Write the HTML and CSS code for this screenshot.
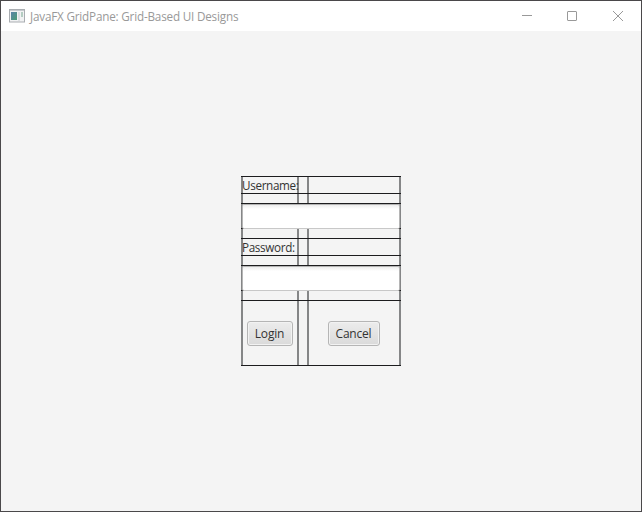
FILE: index.html
```html
<!DOCTYPE html>
<html lang="en">
<head>
<meta charset="utf-8">
<title>JavaFX GridPane: Grid-Based UI Designs</title>
<link rel="stylesheet" href="styles.css">
</head>
<body>
<div class="window">
  <header class="titlebar">
    <svg class="app-icon" width="16" height="14" viewBox="0 0 16 14">
      <defs><linearGradient id="g" x1="0" y1="0" x2="1" y2="1"><stop offset="0" stop-color="#5a83a8"/><stop offset="1" stop-color="#4c9c75"/></linearGradient></defs>
      <rect x=".5" y=".5" width="15" height="12.5" fill="#f1f2f3" stroke="#a9adb1"/>
      <path d="M1 1.5h14" stroke="#c5c9cd"/>
      <rect x="2" y="3" width="6" height="8" fill="url(#g)"/>
      <rect x="9" y="3" width="2" height="9" fill="#dcdfe2"/>
      <rect x="12" y="3" width="2" height="5" fill="#b4cdc2"/>
    </svg>
    <h1 class="title">JavaFX GridPane: Grid-Based UI Designs</h1>
    <svg class="controls" width="104" height="12" viewBox="0 0 104 12" fill="none" stroke="#999">
      <path d="M1 5.5h10"/>
      <rect x="46.5" y="1.5" width="9" height="9" rx=".5"/>
      <path d="M92 1l10 10M102 1l-10 10"/>
    </svg>
  </header>
  <main class="content">
    <form class="grid-pane">
      <label class="label user">Username:</label>
      <div class="field user-field"></div>
      <label class="label pass">Password:</label>
      <div class="field pass-field"></div>
      <button type="button" class="button login">Login</button>
      <button type="button" class="button cancel">Cancel</button>
    </form>
  </main>
</div>
</body>
</html>
```

FILE: styles.css
```css
* { box-sizing: border-box; }

body {
  margin: 0;
  font: 12px/17px "Open Sans", "Noto Sans", sans-serif;
  color: #333;
}

.window {
  display: flex;
  flex-direction: column;
  width: 642px;
  height: 512px;
  border: 1px solid #4a484a;
  background: #f4f4f4;
}

.titlebar {
  display: flex;
  align-items: center;
  height: 30px;
  padding: 0 16px 0 8px;
  background: #fff;
}

.title {
  margin: 0 auto 0 5px;
  font-size: 11.7px;
  font-weight: 400;
  letter-spacing: -0.19px;
  color: #999;
}

.content {
  flex: 1;
  padding: 145px 0 0 240px;
}

/* Grid lines: row lines are painted over the column lines. */
.grid-pane {
  --line: #1c1c1e;
  --col: #858687;
  display: grid;
  grid-template-columns: 57px 10px 93px;
  grid-template-rows: 17px 10px 26px 9px 17px 10px 26px 9px 66px;
  width: 160px;
  background:
    linear-gradient(var(--line) 0 1px, transparent 0 17px, var(--line) 0 18px,
      transparent 0 27px, var(--line) 0 28px, transparent 0 52px, var(--line) 0 53px,
      transparent 0 62px, var(--line) 0 63px, transparent 0 79px, var(--line) 0 80px,
      transparent 0 89px, var(--line) 0 90px, transparent 0 114px, var(--line) 0 115px,
      transparent 0 124px, var(--line) 0 125px, transparent 0 189px, var(--line) 0),
    linear-gradient(90deg, var(--col) 0 2px, transparent 0 56px, var(--col) 0 58px,
      transparent 0 66px, var(--col) 0 68px, transparent 0 158px, var(--col) 0);
}

.label {
  grid-column: 1;
  padding: 1px 0 0 1px;
  font-size: 11.7px;
  letter-spacing: -0.33px;
  white-space: nowrap;
}

.user { grid-row: 1; }
.pass { grid-row: 5; }

.field {
  grid-column: 1 / -1;
  margin: 1px 1px 0;
  border: 1px solid #b5b5b5;
  border-bottom-color: #c8c8c8;
  border-radius: 2px;
  background: linear-gradient(#ededed, #fff 4px);
}

.user-field { grid-row: 3; }
.pass-field { grid-row: 7; }

.button {
  grid-row: 9;
  align-self: center;
  justify-self: center;
  height: 25px;
  padding: 1px 0 0;
  border: 1px solid #b5b5b5;
  border-radius: 3px;
  background: linear-gradient(#ececec, #dadada);
  box-shadow: inset 0 0 0 1px #f2f2f2;
  font: inherit;
  letter-spacing: -0.2px;
  color: #333;
}

.login { grid-column: 1; width: 46px; }
.cancel { grid-column: 3; width: 52px; margin-right: 2px; }
```
